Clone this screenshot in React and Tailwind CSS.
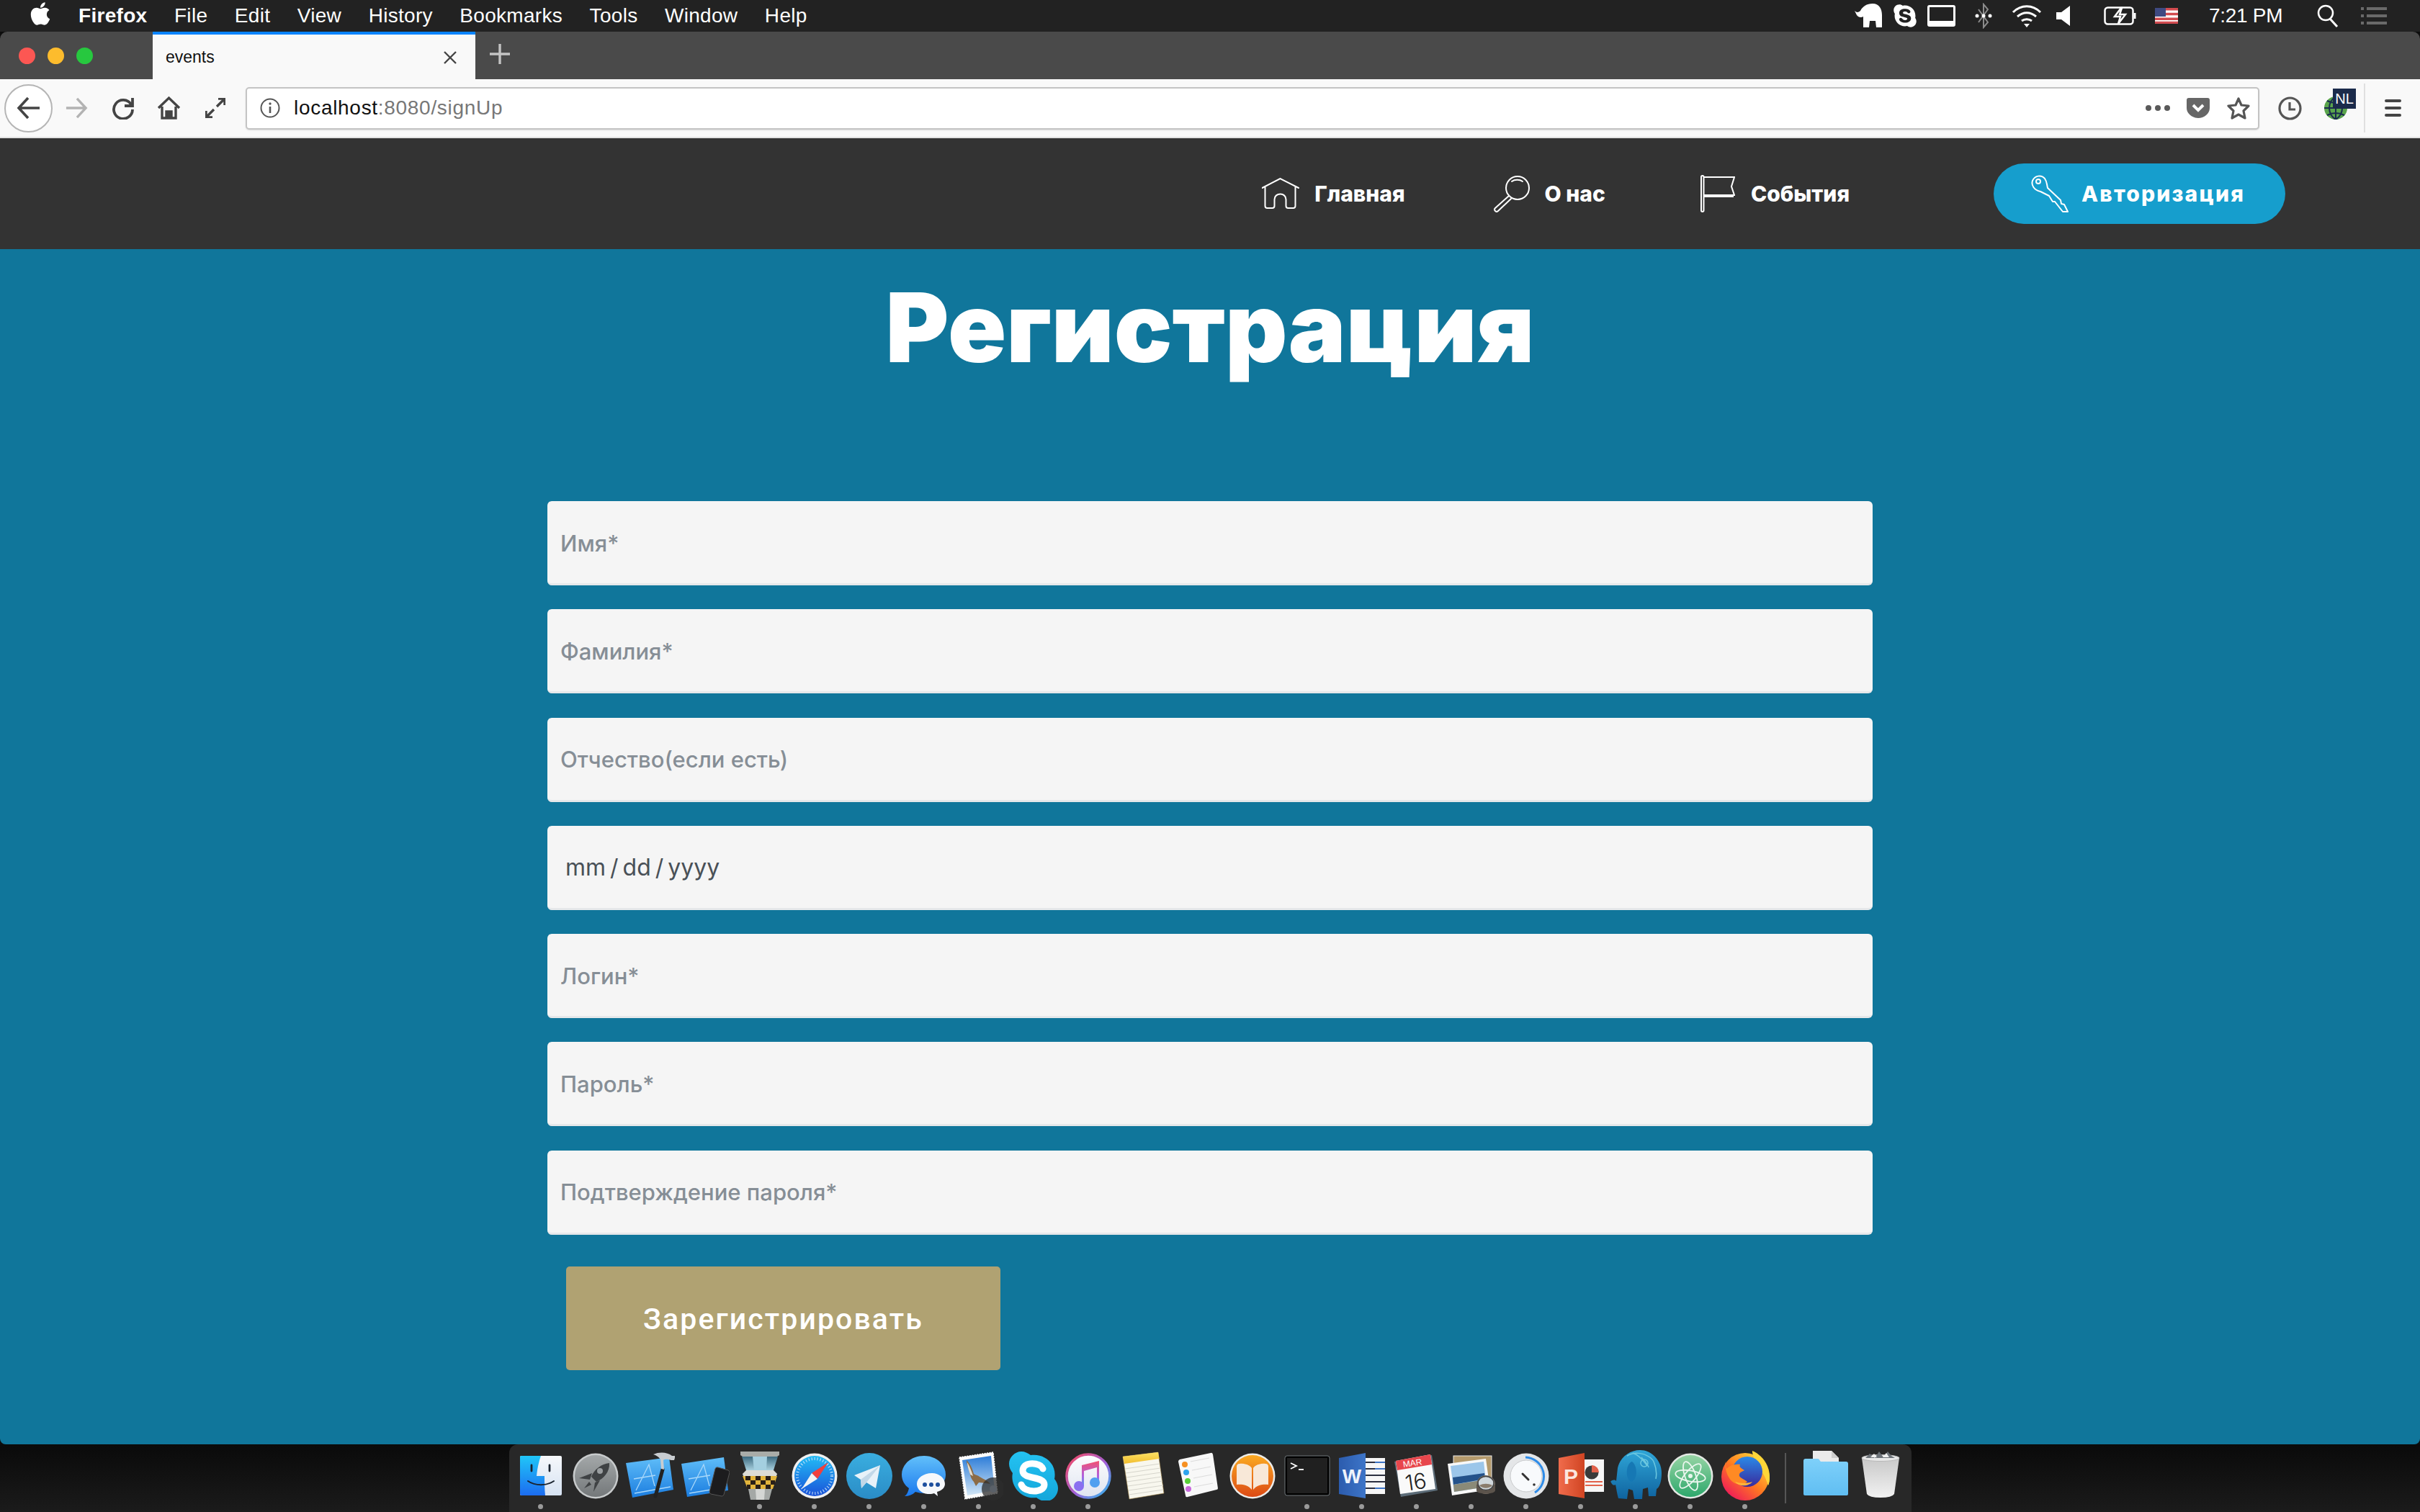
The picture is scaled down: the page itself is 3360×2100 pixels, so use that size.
import { FaApple, FaSkype } from "react-icons/fa"

const FIELDS_TOP = ["Имя*", "Фамилия*", "Отчество(если есть)"]
const FIELDS_BOTTOM = ["Логин*", "Пароль*", "Подтверждение пароля*"]

function MenuBar() {
  const items = ["File", "Edit", "View", "History", "Bookmarks", "Tools", "Window", "Help"]
  return (
    <div className="h-[44px] shrink-0 bg-[#222222] flex items-center text-white text-[28px] font-['Liberation_Sans',sans-serif] tracking-[0.3px]">
      <FaApple className="ml-[40px] w-[32px] h-[36px] mb-[6px] text-white" />
      <div className="flex items-center gap-[37.5px] ml-[37px]">
        <span className="font-bold">Firefox</span>
        {items.map(i => <span key={i}>{i}</span>)}
      </div>
      <div className="ml-auto flex items-center">
        {/* elephant */}
        <svg className="w-[40px] h-[36px]" viewBox="0 0 40 36" fill="#fff"><path d="M1 11c3 3 6 2 8 0 3-6 9-10 17-10 9 0 13 7 13 16v17h-8l-1-9h-8l-1 9h-8V19c-3 2-7 1-9-2z" /></svg>
        <FaSkype className="w-[34px] h-[36px] ml-[14px] text-white" />
        <div className="w-[39px] h-[30px] ml-[14px] rounded-[3px] border-[3px] border-b-[8px] border-white" />
        <svg className="w-[24px] h-[36px] ml-[27px]" viewBox="0 0 24 36" fill="none" stroke="#8b8b8b" strokeWidth="2"><path d="M5 9l13 18-6 7V2l6 7L5 27" /><circle cx="3" cy="18" r="2.5" fill="#fff" stroke="none" /><circle cx="12" cy="18" r="2.5" fill="#fff" stroke="none" /><circle cx="21" cy="18" r="2.5" fill="#fff" stroke="none" /></svg>
        <svg className="w-[42px] h-[32px] ml-[27px]" viewBox="0 0 42 32" fill="none" stroke="#fff" strokeWidth="3"><path d="M2 11c11-11 27-11 38 0M8 17c8-7 18-7 26 0M14 23c4-3 10-3 14 0" /><path d="M17 27h8l-4 5z" fill="#fff" stroke="none" /></svg>
        <svg className="w-[19px] h-[28px] ml-[20px]" viewBox="0 0 19 28" fill="#fff"><path d="M0 9h7l12-9v28L7 19H0z" /></svg>
        <svg className="w-[46px] h-[26px] ml-[47px]" viewBox="0 0 46 26" fill="none" stroke="#fff" strokeWidth="2.5"><rect x="1.5" y="1.5" width="39" height="23" rx="4" /><path d="M43 9v8" strokeWidth="3" /><path d="M24 2l-9 12h8l-3 10 10-13h-8l3-9z" fill="#222" /></svg>
        <svg className="w-[32px] h-[22px] ml-[25px]" viewBox="0 0 32 22"><rect width="32" height="22" fill="#fff" /><path d="M0 0h32v3.4H0zM0 6.8h32v3.4H0zM0 13.6h32V17H0zM0 18.8h32V22H0z" fill="#d24b4f" /><rect width="15" height="12" fill="#3f4a82" /></svg>
        <span className="ml-[43px] w-[100px] whitespace-nowrap tracking-[-0.3px]">7:21 PM</span>
        <svg className="w-[30px] h-[32px] ml-[50px]" viewBox="0 0 30 32" fill="none" stroke="#fff" strokeWidth="2.5"><circle cx="12" cy="12" r="10" /><path d="M18 20l10 11" strokeWidth="3" /></svg>
        <svg className="w-[36px] h-[26px] ml-[31px] mr-[46px]" viewBox="0 0 36 26" fill="#6a6a6a"><path d="M0 1h4v4H0zM8 1h28v4H8zM0 11h4v4H0zM8 11h28v4H8zM0 21h4v4H0zM8 21h28v4H8z" /></svg>
      </div>
    </div>
  )
}

function TabStrip() {
  return (
    <div className="h-[66px] shrink-0 bg-[#4a4a4a] rounded-t-[10px] flex">
      <div className="w-[212px] flex items-center pl-[26px] gap-[17px]">
        <span className="w-[23px] h-[23px] rounded-full bg-[#fc5753]" />
        <span className="w-[23px] h-[23px] rounded-full bg-[#fdbc2d]" />
        <span className="w-[23px] h-[23px] rounded-full bg-[#27c83f]" />
      </div>
      <div className="w-[448px] bg-[#f9f9f9] border-t-[4px] border-[#0a84ff] flex items-center pl-[18px] mb-[-1px] text-[23px] text-[#111] font-['Liberation_Sans',sans-serif]">
        <span>events</span>
        <svg className="w-[20px] h-[20px] ml-auto mr-[25px]" viewBox="0 0 20 20" stroke="#444" strokeWidth="2.4"><path d="M2 2l16 16M18 2L2 18" /></svg>
      </div>
      <svg className="w-[28px] h-[28px] ml-[20px] self-center mb-[4px]" viewBox="0 0 28 28" stroke="#c4c4c4" strokeWidth="3.4"><path d="M14 0v28M0 14h28" /></svg>
    </div>
  )
}

function Toolbar() {
  return (
    <div className="h-[82px] shrink-0 bg-[#f9f9f9] border-b-[2px] border-[#e2e2e2] flex items-center">
      <div className="w-[67px] h-[67px] ml-[6px] rounded-full border-[2px] border-[#b5b5b5] bg-white flex items-center justify-center">
        <svg className="w-[34px] h-[32px]" viewBox="0 0 34 32" fill="none" stroke="#444" strokeWidth="3.6"><path d="M32 16H3M16 2L3 16l13 14" /></svg>
      </div>
      <svg className="w-[32px] h-[30px] ml-[17px]" viewBox="0 0 34 32" fill="none" stroke="#b3b3b3" strokeWidth="3.6"><path d="M2 16h29M18 2l13 14-13 14" /></svg>
      <svg className="w-[32px] h-[32px] ml-[33px]" viewBox="0 0 32 32" fill="none" stroke="#444" strokeWidth="3.8"><path d="M27 11A13 13 0 1 0 29 18" /><path d="M29 2v11H18" fill="none" /></svg>
      <svg className="w-[33px] h-[34px] ml-[31px]" viewBox="0 0 33 34" fill="none" stroke="#444" strokeWidth="3.4"><path d="M2 17L16.500 3 31 17M7 15v16h19V15" /><path d="M13 31v-9h7v9" fill="#444" /></svg>
      <svg className="w-[28px] h-[28px] ml-[34px]" viewBox="0 0 28 28" fill="none" stroke="#444" strokeWidth="3.4"><path d="M16 12L27 1M18 1h9v9M12 16L1 27M1 18v9h9" /></svg>
      <div className="ml-[28px] w-[2796px] h-[59px] rounded-[5px] bg-white border-[2px] border-[#c4c4c4] shadow-[0_1px_2px_rgba(0,0,0,0.12)] flex items-center pl-[18px] pr-[11px]">
        <svg className="w-[28px] h-[28px]" viewBox="0 0 28 28" fill="none" stroke="#555" strokeWidth="2"><circle cx="14" cy="14" r="12.500" /><path d="M14 12v9" strokeWidth="2.6" /><circle cx="14" cy="8" r="1.700" fill="#555" stroke="none" /></svg>
        <span className="ml-[19px] text-[28px] tracking-[0.7px] text-[#111] font-['Liberation_Sans',sans-serif]">localhost<span className="text-[#777]">:8080/signUp</span></span>
        <div className="ml-auto flex items-center">
          <div className="flex gap-[5px]">
            <span className="w-[8px] h-[8px] rounded-full bg-[#5a5a5a]" />
            <span className="w-[8px] h-[8px] rounded-full bg-[#5a5a5a]" />
            <span className="w-[8px] h-[8px] rounded-full bg-[#5a5a5a]" />
          </div>
          <svg className="w-[32px] h-[28px] ml-[23px]" viewBox="0 0 32 28"><path d="M0 3q0-3 3-3h26q3 0 3 3v11c0 8-8 14-16 14S0 22 0 14z" fill="#666" /><path d="M9 10l7 7 7-7" fill="none" stroke="#fff" strokeWidth="4" /></svg>
          <svg className="w-[32px] h-[32px] ml-[24px]" viewBox="0 0 32 32" fill="none" stroke="#555" strokeWidth="3.2" strokeLinejoin="round"><path d="M16 3l4 9 10 1-7 7 2 10-9-5-9 5 2-10-7-7 10-1z" /></svg>
        </div>
      </div>
      <svg className="w-[33px] h-[33px] ml-[26px]" viewBox="0 0 33 33" fill="none" stroke="#555" strokeWidth="3.2"><circle cx="16.500" cy="16.500" r="14.500" /><path d="M16 8v10h8" /></svg>
      <div className="relative w-[32px] h-[32px] ml-[31px]">
        <svg className="w-[32px] h-[32px]" viewBox="0 0 32 32"><circle cx="16" cy="16" r="16" fill="#5aa54c" /><path d="M0 16h32M16 0v32M4 6q12 6 24 0M4 26q12-6 24 0M16 0C4 8 4 24 16 32M16 0c12 8 12 24 0 32" fill="none" stroke="#1a2c4e" strokeWidth="2" /></svg>
        <div className="absolute left-[12px] top-[-11px] w-[32px] h-[28px] bg-[#1b2b4b] text-white text-[20px] leading-[28px] text-center font-['Liberation_Sans',sans-serif]">NL</div>
      </div>
      <div className="w-[2px] h-[68px] bg-[#e0e0e0] ml-[23px]" />
      <div className="ml-[27px] flex flex-col gap-[6px]">
        <span className="w-[23px] h-[4px] rounded-full bg-[#444]" />
        <span className="w-[23px] h-[4px] rounded-full bg-[#444]" />
        <span className="w-[23px] h-[4px] rounded-full bg-[#444]" />
      </div>
    </div>
  )
}

const HomeIcon = () => (
  <svg className="w-[52px] h-[44px] shrink-0" viewBox="0 0 52 44" fill="none" stroke="#fff" strokeWidth="2" strokeLinecap="round"><path d="M0.500 14L25.500 1 51 14M4.500 12v27q0 3 3 3h7q3 0 3-3v-9c0-10 16-10 16 0v9q0 3 3 3h7q3 0 3-3V12" /></svg>
)
const SearchIcon = () => (
  <svg className="w-[52px] h-[52px] shrink-0" viewBox="0 0 52 52" fill="none" stroke="#fff" strokeWidth="2" strokeLinecap="round"><circle cx="34" cy="18" r="16" /><path d="M26 9c4-3 11-3 15 0" /><path d="M22 29L3 46a2.800 2.800 0 0 0 4 4l18-17" /></svg>
)
const FlagIcon = () => (
  <svg className="w-[48px] h-[52px] shrink-0" viewBox="0 0 48 52" fill="none" stroke="#fff" strokeWidth="2"><rect x="1" y="1" width="3.500" height="50" rx="1.700" /><path d="M5 3h42l-4 13 4 12H5M5 30h41" /></svg>
)
const KeyIcon = () => (
  <svg className="w-[52px] h-[52px] shrink-0" viewBox="0 0 52 52" fill="none" stroke="#fff" strokeWidth="2" strokeLinejoin="round"><path d="M2 8c3-7 12-9 17-3 3 4 3 9 4 13l18 17 1 5 4 1 5 10-7 0-11-14-3 0-5-8-12-6C4 21 0 14 2 8z" /><circle cx="10" cy="9" r="3" /></svg>
)

function Nav() {
  return (
    <nav className="h-[154px] shrink-0 bg-[#333333] flex items-center justify-end pr-[187px] text-white text-[30px] font-extrabold font-['Inter',sans-serif]">
      <a className="flex items-center gap-[21px]"><HomeIcon /><span>Главная</span></a>
      <a className="flex items-center gap-[20px] ml-[122px]"><SearchIcon /><span>О нас</span></a>
      <a className="flex items-center gap-[22px] ml-[132px]"><FlagIcon /><span>События</span></a>
      <a className="flex items-center gap-[18px] ml-[200px] h-[84px] w-[405px] pl-[52px] rounded-full bg-[#169ecd] tracking-[2.2px]"><KeyIcon /><span>Авторизация</span></a>
    </nav>
  )
}

function Field({ placeholder }) {
  return (
    <input
      placeholder={placeholder}
      className="w-full h-[117px] shrink-0 rounded-[6px] bg-[#f5f5f5] border-b-[3px] border-[#e6e8ea] pl-[18px] pt-[2px] text-[31px] font-[450] text-[#495057] placeholder:text-[#868e96] placeholder:opacity-100 font-['Inter',sans-serif] outline-none"
    />
  )
}

function SignUp() {
  return (
    <main className="flex-1 min-h-0 bg-[#10769b] rounded-b-[8px] flex flex-col items-center">
      <h1 className="h-[350px] shrink-0 pt-[41px] text-[134px] leading-[134px] font-black text-white font-['Inter',sans-serif]">Регистрация</h1>
      <form className="w-[1840px] flex flex-col gap-[33.3px]">
        {FIELDS_TOP.map(f => <Field key={f} placeholder={f} />)}
        <input
          readOnly
          value="mm / dd / yyyy"
          className="w-full h-[117px] shrink-0 rounded-[6px] bg-[#f5f5f5] border-b-[3px] border-[#e6e8ea] pl-[25px] pt-[2px] text-[32px] [word-spacing:-3px] text-[#495057] font-['Inter',sans-serif] outline-none"
        />
        {FIELDS_BOTTOM.map(f => <Field key={f} placeholder={f} />)}
        <button type="button" className="w-[603px] h-[144px] shrink-0 ml-[26px] mt-[11px] pt-[3px] rounded-[5px] bg-[#b0a272] text-white text-[41px] font-medium tracking-[2.1px] font-['Roboto',sans-serif]">Зарегистрировать</button>
      </form>
    </main>
  )
}

/* dock pictures, all on a 68x68 box centred in the 76px slot */
const Finder = () => (
  <svg viewBox="0 0 68 68"><defs><linearGradient id="fa" x1="0" y1="0" x2="0" y2="1"><stop offset="0" stopColor="#20c6f8" /><stop offset="1" stopColor="#1c6cf0" /></linearGradient><linearGradient id="fb" x1="0" y1="0" x2="0" y2="1"><stop offset="0" stopColor="#f6f8fb" /><stop offset="1" stopColor="#d6e2f2" /></linearGradient></defs><rect x="5" y="6" width="58" height="55" rx="2" fill="url(#fb)" /><path d="M7 6h27c-3 8-5 18-6 28h11c0 9 0 18 1 27H7a2 2 0 0 1-2-2V8a2 2 0 0 1 2-2z" fill="url(#fa)" /><path d="M21 19v8M46 19v8" stroke="#1b2430" strokeWidth="2.800" strokeLinecap="round" /><path d="M16 41c10 7 26 7 36 0" fill="none" stroke="#1b2430" strokeWidth="2" strokeLinecap="round" /></svg>
)
const Launchpad = () => (
  <svg viewBox="0 0 68 68"><defs><linearGradient id="la" x1="0" y1="0" x2="0" y2="1"><stop offset="0" stopColor="#a4a8a9" /><stop offset="1" stopColor="#74787a" /></linearGradient></defs><circle cx="34" cy="34" r="31.500" fill="#c8cbcc" /><circle cx="34" cy="34" r="29" fill="url(#la)" /><path d="M53 16c-11 1-21 9-25 19l7 7c10-4 19-14 18-26zM29 30l-18 7 15 2zM40 40l-9 16 2-13zM25 42l-7 9 10-5z" fill="#3f4244" /><circle cx="40" cy="27" r="4" fill="#9a9ea0" /></svg>
)
const Xcode = () => (
  <svg viewBox="0 0 68 68"><defs><linearGradient id="xa" x1="0" y1="0" x2="0" y2="1"><stop offset="0" stopColor="#5fbdf8" /><stop offset="1" stopColor="#1b7de0" /></linearGradient></defs><path d="M0 16L60 8l6 45-57 11z" fill="url(#xa)" /><path d="M14 54l18-36 8 30M11 38l30-5M12 58l50-9" fill="none" stroke="#a9d8fa" strokeWidth="1.300" /><path d="M51 25L41 62" stroke="#222" strokeWidth="5" strokeLinecap="round" /><path d="M38 4c9-4 20-3 26 2l5 0-2 6-4 0c-5-1-8-2-11 0l1 13-4-1-1-13c-3-4-6-6-10-7z" fill="#c8ccd0" /></svg>
)
const Simulator = () => (
  <svg viewBox="0 0 68 68"><defs><linearGradient id="sa" x1="0" y1="0" x2="0" y2="1"><stop offset="0" stopColor="#5fbdf8" /><stop offset="1" stopColor="#1b7de0" /></linearGradient></defs><path d="M1 17L60 8l6 46-57 9z" fill="url(#sa)" /><path d="M14 54l18-36 8 30M11 38l30-5M12 58l30-5" fill="none" stroke="#a9d8fa" strokeWidth="1.300" /><path d="M52 22l14 4q2 1 2 3L60 60q-1 2-3 2l-15-3q-2-1-2-3l8-32q1-3 4-2z" fill="#1c1c1e" stroke="#555" strokeWidth="1" /></svg>
)
const Tower = () => (
  <svg viewBox="0 0 68 68"><defs><linearGradient id="ta" x1="0" y1="0" x2="0" y2="1"><stop offset="0" stopColor="#3c6a80" /><stop offset="1" stopColor="#a8d0de" /></linearGradient></defs><path d="M7 0h54v5l-3 2H10L7 5z" fill="#a9aca8" /><path d="M9 7h50l-6 19H15z" fill="url(#ta)" /><path d="M24 7h20l-1 19H26z" fill="#a4cfe0" /><path d="M15 26h38l5 5-1 3H11l-1-3z" fill="#dcdcd6" /><path d="M10 34h48l-6 18H17z" fill="#e2b43c" /><path d="M14 34h7v6h-7zM28 34h7v6h-7zM42 34h7v6h-7zM21 40h7v6h-7zM35 40h7v6h-7zM49 40h6v6h-6zM16 46h5v6h-5zM28 46h7v6h-7zM42 46h7v6h-7z" fill="#2a2018" /><path d="M18 52h33l-4 15H21z" fill="#a4a8a6" /><path d="M28 52h13l-1 15H29z" fill="#d4d6d4" /></svg>
)
const Safari = () => (
  <svg viewBox="0 0 68 68"><defs><linearGradient id="ca" x1="0" y1="0" x2="0" y2="1"><stop offset="0" stopColor="#22bcf6" /><stop offset="1" stopColor="#1a52d8" /></linearGradient></defs><circle cx="34" cy="34" r="31.500" fill="#f0f0f0" /><circle cx="34" cy="34" r="28" fill="url(#ca)" /><circle cx="34" cy="34" r="24" fill="none" stroke="#cfe6fa" strokeWidth="4" strokeDasharray="1 3" /><path d="M53 15L30 30l8 8z" fill="#f0403e" /><path d="M16 52l14-22 8 8z" fill="#f4f4f4" /></svg>
)
const Telegram = () => (
  <svg viewBox="0 0 68 68"><defs><linearGradient id="ga" x1="0" y1="0" x2="0" y2="1"><stop offset="0" stopColor="#3aaee0" /><stop offset="1" stopColor="#2a8cc6" /></linearGradient></defs><circle cx="34" cy="34" r="32" fill="url(#ga)" /><path d="M13 33l36-14-6 32-13-8-7 8-1-12z" fill="#e8f2f9" /><path d="M22 39l27-20-19 24-7 8z" fill="#c2d8e8" /></svg>
)
const Messages = () => (
  <svg viewBox="0 0 68 68"><defs><linearGradient id="ma" x1="0" y1="0" x2="0" y2="1"><stop offset="0" stopColor="#62c0fa" /><stop offset="1" stopColor="#1a78ee" /></linearGradient></defs><path d="M34 6C16 6 3 18 3 32c0 8 4 15 10 19-1 5-3 9-6 11 6 0 11-2 15-6 4 1 8 2 12 2 17 0 30-12 30-26S51 6 34 6z" fill="url(#ma)" /><path d="M45 30c-12 0-21 7-21 15 0 7 6 13 15 14 3 0 7 0 9-1l5 4-1-6c7-2 11-6 11-11 0-8-8-15-18-15z" fill="#f6f8fb" /><circle cx="35" cy="46" r="3" fill="#1d4f9e" /><circle cx="44" cy="46" r="3" fill="#1d4f9e" /><circle cx="53" cy="46" r="3" fill="#1d4f9e" /></svg>
)
const Mail = () => (
  <svg viewBox="0 0 68 68"><defs><linearGradient id="ea" x1="0" y1="0" x2="0" y2="1"><stop offset="0" stopColor="#2c7cd8" /><stop offset="1" stopColor="#d2e6f6" /></linearGradient></defs><path d="M7 8L54 1l6 57-45 8z" fill="#fbfbfb" stroke="#fff" strokeWidth="1.500" strokeDasharray="2 1.500" /><path d="M11 12L51 6l5 48-38 7z" fill="url(#ea)" /><path d="M17 12c6 6 8 12 10 19 3 2 6 2 8 4 5 3 11 5 15 10-6-1-12-2-16-2l-4 5-3-6c-3-3-5-8-6-14-2-6-4-11-4-16z" fill="#8c6c46" /><path d="M18 15c3 5 6 12 8 19l-4-2c-2-6-4-12-4-17z" fill="#e4dccc" /><circle cx="54" cy="52" r="16" fill="#2c2c2c" opacity=".75" /><circle cx="54" cy="52" r="5" fill="#5a6068" /></svg>
)
const Skype = () => (
  <svg viewBox="0 0 68 68"><defs><linearGradient id="ka" x1="0" y1="0" x2="0" y2="1"><stop offset="0" stopColor="#24c2f2" /><stop offset="1" stopColor="#14a6da" /></linearGradient></defs><path d="M17 0c5 0 9 2 13 5 20-3 37 13 33 33 3 4 5 8 5 13 0 10-8 18-17 18-5 0-9-2-13-5C18 67 1 48 5 30 2 26 0 22 0 17 0 8 8 0 17 0z" fill="url(#ka)" /><path d="M47 24c-3-9-27-11-28 2-1 14 30 7 30 20 0 12-28 12-32 0" fill="none" stroke="#fff" strokeWidth="9" strokeLinecap="round" /></svg>
)
const Itunes = () => (
  <svg viewBox="0 0 68 68"><defs><linearGradient id="it" x1="0" y1="0" x2="1" y2="1"><stop offset="0" stopColor="#f8495e" /><stop offset=".55" stopColor="#a060d8" /><stop offset="1" stopColor="#28c0f0" /></linearGradient><linearGradient id="in" x1="0" y1="0" x2="0" y2="1"><stop offset="0" stopColor="#f4506e" /><stop offset=".6" stopColor="#b060e0" /><stop offset="1" stopColor="#4aa0f0" /></linearGradient><linearGradient id="ib" x1="0" y1="0" x2="0" y2="1"><stop offset="0" stopColor="#fdfdfe" /><stop offset="1" stopColor="#dfe4f0" /></linearGradient></defs><circle cx="34" cy="34" r="30" fill="url(#ib)" stroke="url(#it)" strokeWidth="3.500" /><path d="M25 19l24-6v30h-3V22l-18 5v21h-3z" fill="url(#in)" /><circle cx="21" cy="48" r="7" fill="#8a70f0" /><circle cx="43" cy="43" r="7" fill="#50a0f0" /></svg>
)
const Notes = () => (
  <svg viewBox="0 0 68 68"><defs><linearGradient id="na" x1="0" y1="0" x2="0" y2="1"><stop offset="0" stopColor="#fbe264" /><stop offset="1" stopColor="#f2bd2e" /></linearGradient></defs><path d="M6 7L55 1l8 57-48 8z" fill="#f8f7ee" stroke="#a88a4a" strokeWidth=".6" /><path d="M6 7L55 1l1.500 9L8 17z" fill="url(#na)" /><path d="M9 24l48-7M10 30l48-7M11 36l48-7M12 42l48-7M13 48l48-7M14 54l48-7M14 60l48-7" stroke="#d6d5cc" strokeWidth="1" /></svg>
)
const Reminders = () => (
  <svg viewBox="0 0 68 68"><path d="M9 11L52 2q2-1 3 2l7 47q0 2-2 2L20 63q-3 1-3-2L7 14q0-2 2-3z" fill="#f8f8f8" /><circle cx="16" cy="18" r="4" fill="#f69022" /><circle cx="18" cy="29" r="4" fill="#2ea4ee" /><circle cx="20" cy="41" r="4" fill="#58d038" /><circle cx="21" cy="52" r="4" fill="#c868dc" /><path d="M24 14l26-5M26 26l26-5M28 37l26-5M29 49l26-5" stroke="#dcdcdc" strokeWidth="1.200" /></svg>
)
const Books = () => (
  <svg viewBox="0 0 68 68"><defs><linearGradient id="ba" x1="0" y1="0" x2="0" y2="1"><stop offset="0" stopColor="#fbaa22" /><stop offset="1" stopColor="#dc4a14" /></linearGradient></defs><circle cx="34" cy="34" r="31.500" fill="#ececea" /><circle cx="34" cy="34" r="29" fill="url(#ba)" /><path d="M33 23c-3-5-12-7-17-6-3 0-4 2-4 4v25c6-1 16 0 21 7zM35 23c3-5 12-7 17-6 3 0 4 2 4 4v25c-6-1-16 0-21 7z" fill="#f8e8d8" /></svg>
)
const Terminal = () => (
  <svg viewBox="0 0 68 68"><rect x="3" y="6" width="62" height="55" rx="3" fill="#000" stroke="#70777a" strokeWidth="1" /><rect x="6" y="9" width="56" height="49" fill="#202020" /><path d="M11 16l8 4-8 4" fill="none" stroke="#fff" strokeWidth="1.800" /><path d="M22 25h7" stroke="#fff" strokeWidth="1.800" /></svg>
)
const Word = () => (
  <svg viewBox="0 0 68 68"><defs><linearGradient id="wa" x1="0" y1="0" x2="1" y2="0"><stop offset="0" stopColor="#2c5cae" /><stop offset="1" stopColor="#3d75c8" /></linearGradient></defs><rect x="39" y="9" width="27" height="50" fill="#f6f6f6" /><path d="M39 15h27M39 24h27M39 33h27M39 42h27M39 51h27" stroke="#2c3040" strokeWidth="2.200" /><path d="M52 15h14M52 24h14M52 51h14" stroke="#3d75c8" strokeWidth="2.200" /><path d="M2 9L39 2v63L2 59z" fill="url(#wa)" /><text x="20" y="44" textAnchor="middle" fontSize="28" fontWeight="700" fill="#eef3fb" fontFamily="Liberation Sans, sans-serif">W</text></svg>
)
const Calendar = () => (
  <svg viewBox="0 0 68 68"><path d="M3 14L55 5l8 49-51 9z" fill="#5c6c78" /><path d="M5 13L53 4l7 48-49 7z" fill="#fafafa" /><path d="M5 13L53 4l2 14-48 8z" fill="#e8464c" /><g transform="rotate(-8 30 30)"><text x="30" y="20" textAnchor="middle" fontSize="12" fill="#fff" fontFamily="Liberation Sans, sans-serif">MAR</text><text x="31" y="53" textAnchor="middle" fontSize="30" fill="#222" fontFamily="Inter, sans-serif" fontWeight="300">16</text></g></svg>
)
const Preview = () => (
  <svg viewBox="0 0 68 68"><rect x="9" y="6" width="53" height="44" fill="#b49a6c" stroke="#e8e8e8" strokeWidth="1" /><path d="M1 17l53-7 6 43-53 8z" fill="#f8f8f8" /><path d="M5 20l46-6 4 35-45 7z" fill="#9cc6ea" /><path d="M8 36l44-6 1 8-44 8z" fill="#24528a" /><path d="M9 46l44-7 2 10-45 7z" fill="#8a8a78" /><circle cx="54" cy="46" r="13" fill="#7c736a" /><path d="M41 46v8c0 6 26 6 26 0v-8z" fill="#5c544c" /><ellipse cx="54" cy="44" rx="11" ry="9.500" fill="#d0d8dc" stroke="#444" strokeWidth="1.500" /><path d="M45 47c6-3 12-3 18 0-4 5-14 5-18 0z" fill="#8a7c6c" /></svg>
)
const Clock = () => (
  <svg viewBox="0 0 68 68"><circle cx="34" cy="34" r="31.500" fill="#e4e6e8" /><circle cx="34" cy="34" r="22" fill="#f8fafc" stroke="#c8cacc" strokeWidth="1" /><path d="M33 8a26.500 26.500 0 0 1 13 49" fill="none" stroke="#2f8ce8" strokeWidth="3" /><path d="M29 31l8 8" stroke="#333" strokeWidth="3" strokeLinecap="round" /><circle cx="45" cy="46" r="1.800" fill="#333" /></svg>
)
const Powerpoint = () => (
  <svg viewBox="0 0 68 68"><defs><linearGradient id="pa" x1="0" y1="0" x2="1" y2="0"><stop offset="0" stopColor="#f06c4c" /><stop offset="1" stopColor="#d04422" /></linearGradient></defs><rect x="39" y="11" width="27" height="45" fill="#f6f6f6" /><circle cx="49" cy="29" r="9.500" fill="#3a3a3a" /><path d="M49 29V19a10 10 0 0 1 10 10z" fill="#e2614a" /><path d="M40 42h24M40 47h24" stroke="#e2614a" strokeWidth="2" /><path d="M3 9L39 2v63L3 59z" fill="url(#pa)" /><text x="20" y="45" textAnchor="middle" fontSize="30" fontWeight="700" fill="#fbe6df" fontFamily="Liberation Sans, sans-serif">P</text></svg>
)
const Elephant = () => (
  <svg viewBox="0 0 68 68" className="overflow-visible"><defs><linearGradient id="ee" x1="0" y1="0" x2="0" y2="1"><stop offset="0" stopColor="#2fa6d8" /><stop offset="1" stopColor="#0f639f" /></linearGradient></defs><path d="M-1 42c3-3 6-3 8-1l2-18C12 8 26-2 40-2c18 0 30 16 30 32 0 12-3 20-7 22l-1 10H52l-1-12-7 2-1 14H32l-2-12-6-2-2 14-12-1c-2-7-3-15-4-19-2 2-5 0-6-3z" fill="url(#ee)" /><path d="M29 14c-9 3-10 24-1 28 9-3 9-22 1-28z" fill="#1678b4" /><path d="M22 6c10-6 26-5 36 6M30 2c8 3 14 9 20 18M58 12c4 8 6 16 4 26M42 8c4 4 8 8 10 14" fill="none" stroke="#6cc8e0" strokeWidth="1.500" /><circle cx="46" cy="16" r="5" fill="none" stroke="#6cc8e0" strokeWidth="1.500" /></svg>
)
const Atom = () => (
  <svg viewBox="0 0 68 68"><defs><linearGradient id="aa" x1="0" y1="0" x2="0" y2="1"><stop offset="0" stopColor="#96d4a4" /><stop offset="1" stopColor="#2ea86c" /></linearGradient></defs><circle cx="34" cy="34" r="31.500" fill="#e4e8e4" /><circle cx="34" cy="34" r="29" fill="url(#aa)" /><g fill="none" stroke="#eaf6ee" strokeWidth="1.800"><ellipse cx="34" cy="34" rx="7.500" ry="21" transform="rotate(-20 34 34)" /><ellipse cx="34" cy="34" rx="7.500" ry="21" transform="rotate(40 34 34)" /><ellipse cx="34" cy="34" rx="7.500" ry="21" transform="rotate(100 34 34)" /></g><circle cx="34" cy="34" r="3" fill="#eaf6ee" /></svg>
)
const Firefox = () => (
  <svg viewBox="0 0 68 68" className="overflow-visible"><defs><linearGradient id="ff" x1="0.850" y1="0.100" x2="0.150" y2="0.900"><stop offset="0" stopColor="#ffd53a" /><stop offset=".5" stopColor="#ff7a20" /><stop offset="1" stopColor="#ee1c58" /></linearGradient><linearGradient id="fg" x1="0" y1="0" x2="0" y2="1"><stop offset="0" stopColor="#2a8ae8" /><stop offset="1" stopColor="#3a2a9c" /></linearGradient></defs><circle cx="34" cy="35" r="33" fill="url(#ff)" /><path d="M44-1c-1 8 12 14 20 24 5 8 5 16 2 24-4-14-12-26-22-48z" fill="#ffe650" /><path d="M44-1c14 6 24 20 24 36 0 6-1 10-2 12-2-16-20-26-22-48z" fill="#ffd638" /><circle cx="37" cy="28" r="21" fill="url(#fg)" /><path d="M6 14l2 10c5-5 12-7 19-6-2 4 2 5 6 8-3 2-8 3-7 8 1 3 8 5 11 8-4 4-12 5-19 1C10 38 6 26 6 14z" fill="#ff8a24" /><path d="M20 42c8 3 20 2 24 0-4 6-18 8-24 0z" fill="#ffb43a" /></svg>
)
const Folder = () => (
  <svg viewBox="0 0 68 68" className="overflow-visible"><defs><linearGradient id="oa" x1="0" y1="0" x2="0" y2="1"><stop offset="0" stopColor="#7ed0fa" /><stop offset="1" stopColor="#60bef2" /></linearGradient></defs><path d="M16-1h26l10 10v10H16z" fill="#ebebeb" /><path d="M42-1l10 10H42z" fill="#cfcfcf" /><path d="M3 13q0-3 3-3h17q2 0 3 3l1 1h35q3 0 3 3v42q0 2-2 2H5q-2 0-2-2z" fill="url(#oa)" /></svg>
)
const Trash = () => (
  <svg viewBox="0 0 68 68"><defs><linearGradient id="ra" x1="0" y1="0" x2="0" y2="1"><stop offset="0" stopColor="#c8c8c8" /><stop offset="1" stopColor="#f2f2f2" /></linearGradient></defs><path d="M8 9h52l-7 50q-3 5-19 5t-19-5z" fill="url(#ra)" /><ellipse cx="34" cy="9" rx="26" ry="4.500" fill="#e8e8e8" stroke="#b8b8b8" strokeWidth="1" /><path d="M13 9l6-6 7 6 6-9 6 8 6-8 5 6 5 3z" fill="#6c7278" /><path d="M20 8l5-5 4 5zM37 8l5-6 4 6z" fill="#f0f0f0" /></svg>
)

const DOCK = [
  [Finder, true], [Launchpad, false], [Xcode, false], [Simulator, false], [Tower, true], [Safari, true],
  [Telegram, true], [Messages, true], [Mail, true], [Skype, true], [Itunes, true], [Notes, false], [Reminders, false],
  [Books, false], [Terminal, true], [Word, true], [Calendar, true], [Preview, true], [Clock, true],
  [Powerpoint, true], [Elephant, true], [Atom, true], [Firefox, true],
]

function DockItem({ icon: Icon, running }) {
  return (
    <div className="w-[76px] shrink-0 flex flex-col items-center">
      <div className="w-[68px] h-[68px] mt-[10px]"><Icon /></div>
      <span className={running ? "w-[7px] h-[7px] mt-[5px] rounded-full bg-[#9a9a9a]" : "w-[7px] h-[7px] mt-[5px]"} />
    </div>
  )
}

function Dock() {
  return (
    <div className="h-[94px] shrink-0 flex justify-center bg-linear-to-b from-[#0a0a0a] to-[#1b1b1b]">
      <div className="w-[1947px] h-full bg-[#282828] rounded-t-[12px] flex pl-[6px]">
        {DOCK.map(([Icon, running], i) => <DockItem key={i} icon={Icon} running={running} />)}
        <div className="w-[36px] shrink-0 flex justify-center pt-[12px]"><span className="w-[2px] h-[70px] bg-[#565656]" /></div>
        <DockItem icon={Folder} running={false} />
        <DockItem icon={Trash} running={false} />
      </div>
    </div>
  )
}

export default function App() {
  return (
    <div className="w-[3360px] h-[2100px] overflow-hidden bg-[#0d0d0d] flex flex-col">
      <MenuBar />
      <TabStrip />
      <Toolbar />
      <Nav />
      <SignUp />
      <Dock />
    </div>
  )
}
